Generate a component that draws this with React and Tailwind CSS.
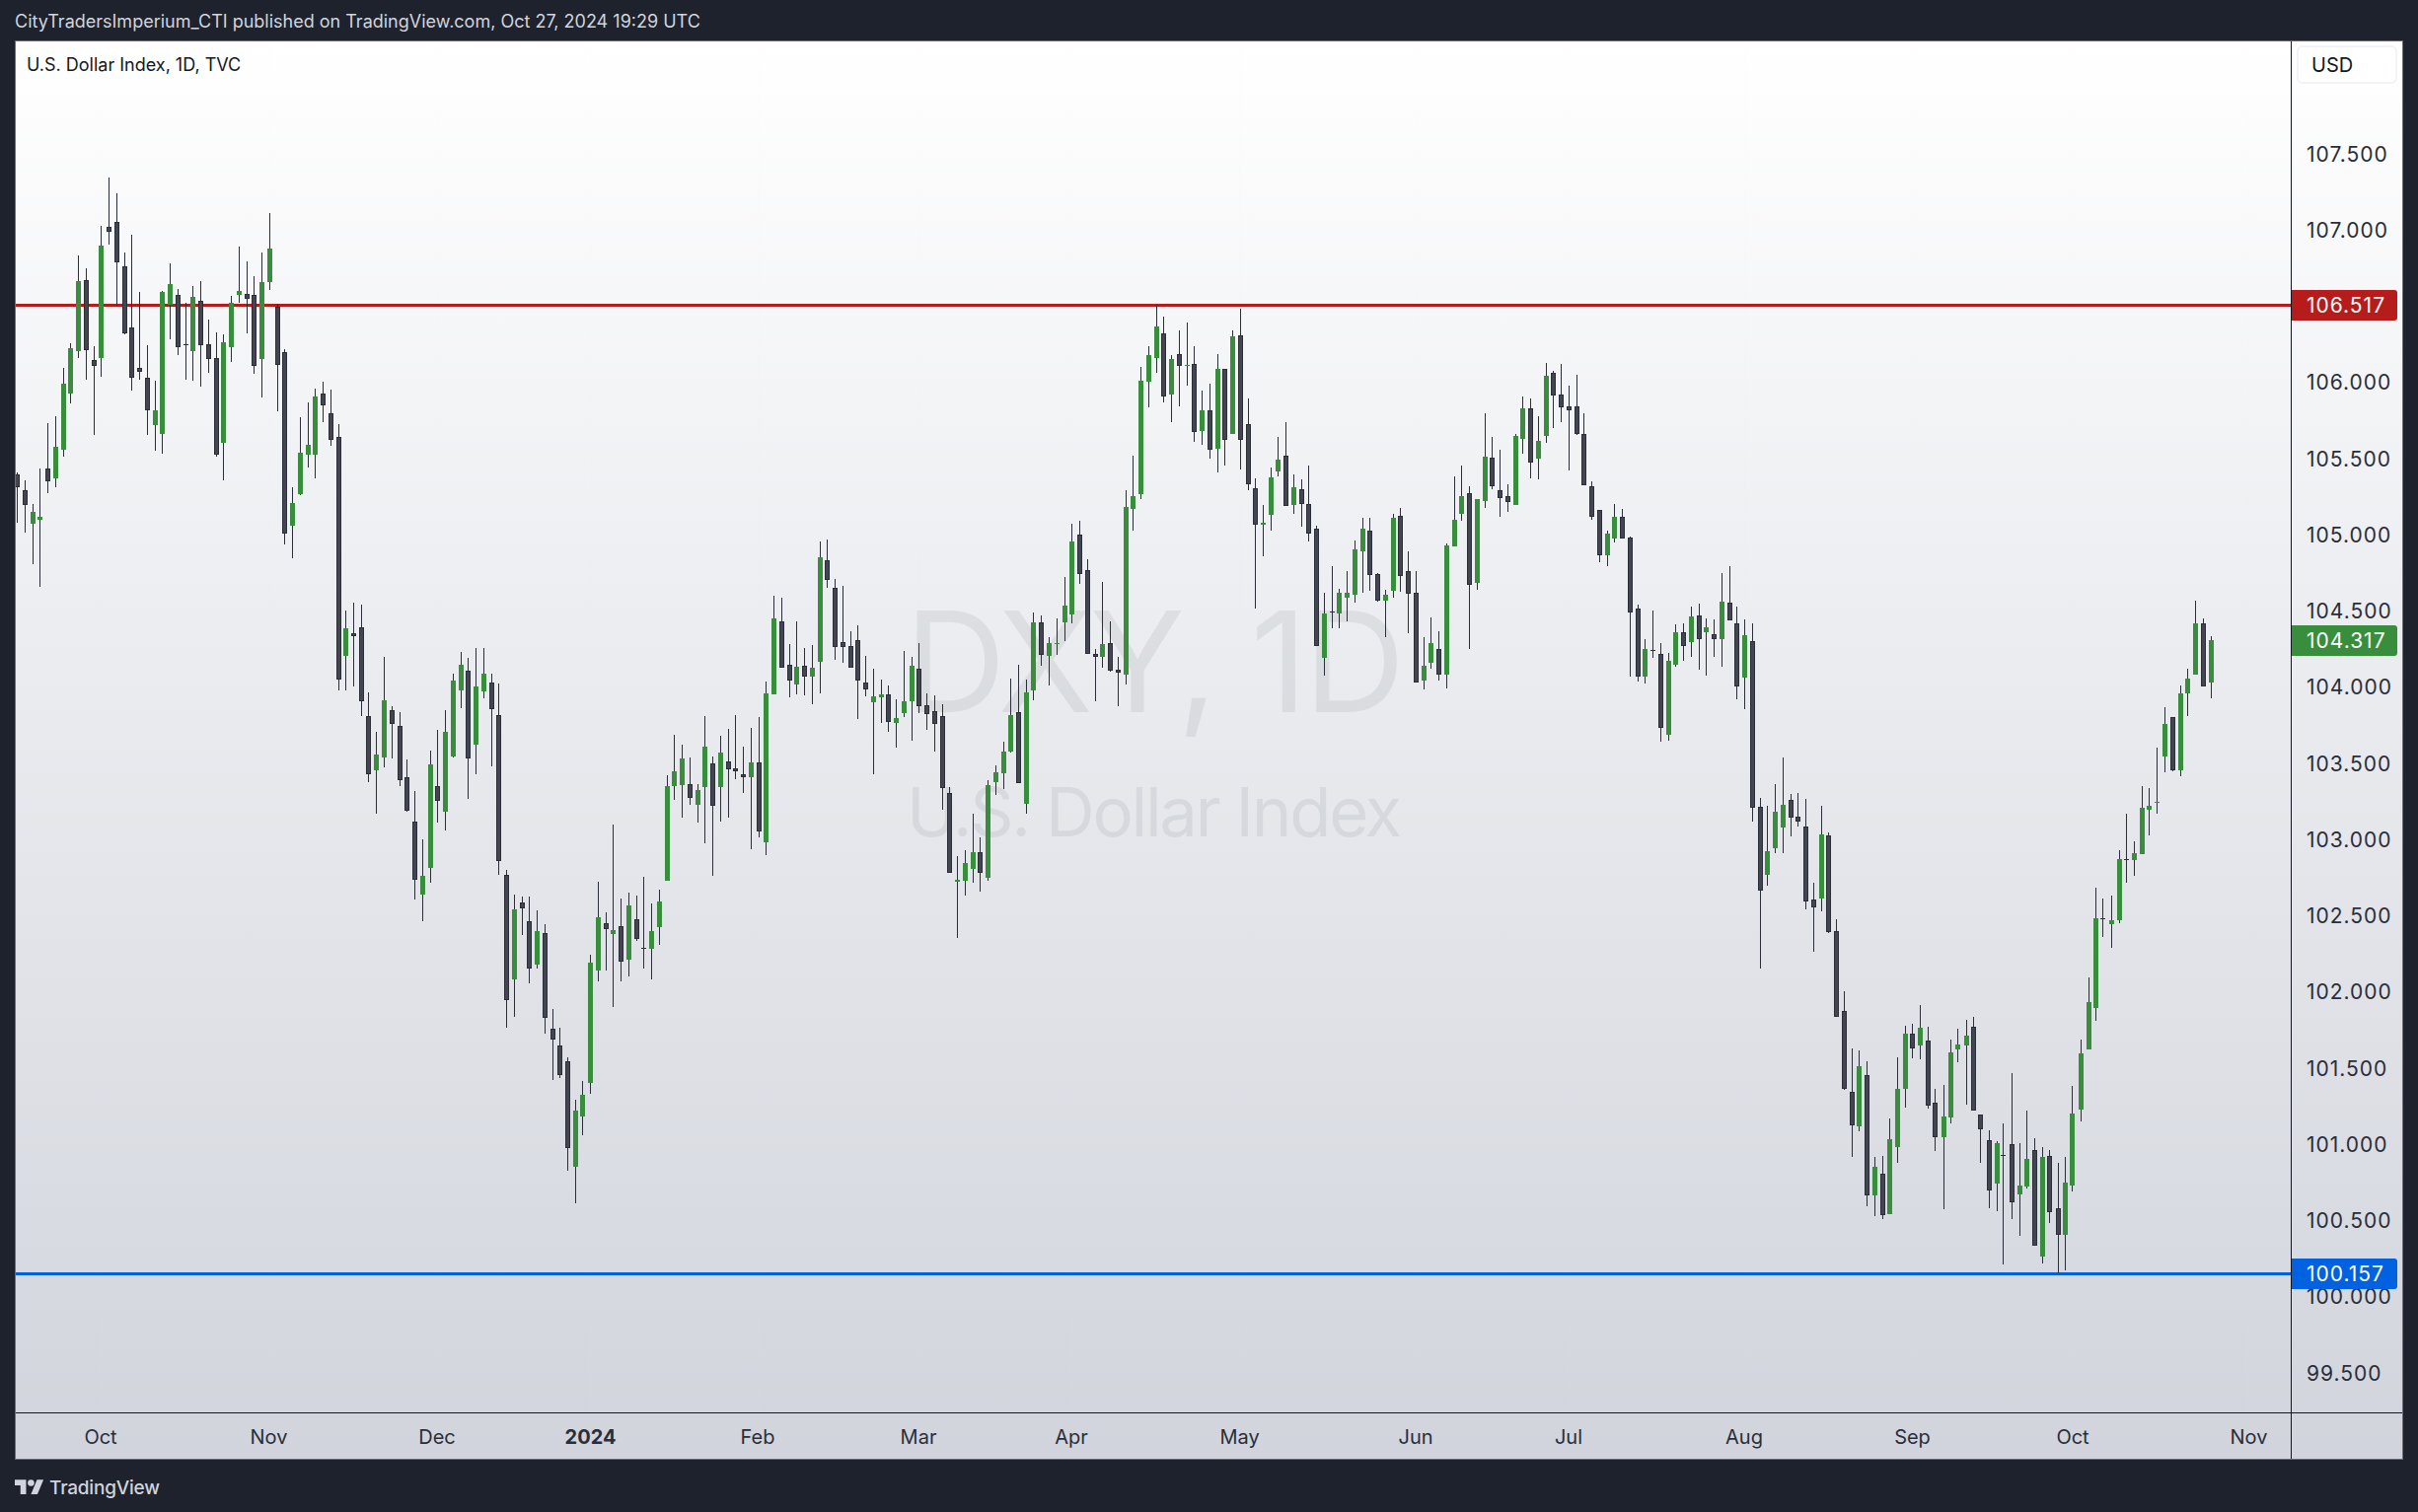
const A = [
[34,479,481,494,530,'d'],[50,487,497,512,540,'d'],[66,511,519,531,572,'g'],[79,475,524,527,595,'g'],[95,429,475,488,500,'d'],[111,422,453,485,494,'g'],[126,373,389,456,463,'g'],[140,348,353,399,409,'g'],[156,259,285,356,363,'g'],[171,272,284,355,385,'d'],[187,351,365,371,441,'d'],[201,229,249,363,382,'g'],[217,180,230,235,248,'d'],[232,196,225,266,310,'d'],[248,256,270,338,339,'d'],[262,238,332,383,396,'d'],[277,296,373,377,385,'d'],[293,350,383,416,441,'d'],[309,386,416,431,457,'g'],[323,295,296,440,460,'g'],[338,267,288,309,344,'g'],[354,293,299,352,360,'d'],[369,307,349,350,385,'d'],[383,290,301,356,386,'g'],[399,285,305,350,392,'d'],[415,324,349,364,378,'d'],[430,337,363,461,463,'d'],[444,339,347,449,487,'g'],[460,300,307,352,367,'g'],[475,250,295,299,307,'g'],[491,265,298,303,338,'d'],[505,280,299,371,379,'d'],[520,256,286,364,403,'g'],[536,216,252,286,294,'g'],[552,308,311,370,417,'d'],[565,354,357,541,552,'d'],[581,494,510,533,566,'g'],[597,423,459,501,502,'g'],[612,408,451,461,474,'g'],[626,394,402,461,485,'g'],[642,387,399,411,428,'d'],[657,395,419,446,452,'d'],[673,430,443,689,700,'d'],
];
const B = [
[687,291,328,387,460,'g'],[703,274,338,345,452,'d'],[718,278,326,483,514,'d'],[733,464,514,638,654,'d'],[748,548,596,629,721,'g'],[763,388,481,602,623,'g'],[779,493,502,531,604,'d'],[795,506,535,650,663,'d'],[808,606,644,715,717,'d'],[824,673,738,861,903,'d'],[840,776,853,893,949,'g'],[856,587,617,836,868,'g'],[869,544,663,694,740,'d'],[885,502,548,717,757,'g'],[901,424,439,600,602,'g'],[916,378,406,460,498,'g'],[930,391,418,604,690,'d'],[946,370,452,575,638,'g'],[961,370,424,462,477,'g'],[977,424,443,500,621,'d'],[991,445,512,822,851,'d'],[1006,840,851,1116,1175,'d'],[1022,893,924,1073,1152,'g'],[1038,897,909,922,978,'d'],[1052,897,949,1050,1081,'d'],[1067,926,970,1042,1050,'g'],[1083,955,974,1154,1187,'d'],[1099,1135,1177,1200,1286,'d'],[1112,1175,1213,1275,1282,'d'],[1128,1238,1246,1430,1478,'d'],[1144,1328,1351,1470,1547,'g'],[1157,1288,1317,1363,1403,'g'],[1173,1020,1037,1292,1315,'g'],[1189,866,941,1054,1077,'g'],[1204,930,953,966,1054,'d'],[1218,744,968,976,1131,'g'],[1234,901,960,1035,1077,'d'],[1249,889,916,1031,1066,'g'],[1265,895,945,987,991,'d'],[1279,855,1006,1008,1050,'d'],[1295,912,970,1008,1073,'g'],[1310,882,907,962,999,'g'],[1326,640,663,863,863,'g'],[1340,555,631,663,694,'g'],[1355,575,604,661,730,'g'],[1371,602,659,688,702,'d'],[1387,659,671,702,740,'g'],[1400,514,579,665,784,'g'],[1416,600,615,705,853,'d'],[1432,556,592,665,738,'g'],[1447,541,610,627,730,'d'],[1461,512,625,631,648,'d'],[1477,579,638,644,677,'d'],[1493,539,613,644,797,'g'],[1508,516,613,759,771,'d'],[1522,441,466,782,809,'g'],[1538,259,307,468,468,'g'],[1553,263,314,412,412,'d'],
];
const C = [
[0,1120,1182,1229,1281,'d'],[15,1050,1188,1242,1272,'g'],[30,1132,1185,1218,1275,'d'],[46,1122,1191,1218,1302,'g'],[62,808,855,1173,1269,'g'],[75,801,864,924,948,'d'],[91,922,948,1128,1167,'d'],[107,942,1113,1128,1176,'d'],[123,1080,1125,1191,1191,'d'],[136,1062,1107,1230,1347,'d'],[152,1155,1236,1257,1278,'d'],[168,1194,1278,1296,1515,'g'],[183,1227,1272,1281,1359,'g'],[197,1245,1272,1356,1386,'d'],[213,1287,1344,1359,1434,'g'],[228,1140,1293,1329,1341,'g'],[244,1158,1185,1293,1413,'g'],[258,1116,1194,1308,1329,'d'],[273,1269,1305,1332,1380,'d'],[289,1275,1323,1362,1446,'d'],[305,1302,1338,1557,1623,'d'],
[486,1023,1053,1260,1290,'g'],[501,1032,1053,1152,1185,'d'],[516,1098,1116,1155,1245,'g'],[532,1041,1116,1119,1152,'g'],[548,915,1002,1053,1110,'g'],[561,753,807,1029,1056,'g'],[577,744,786,906,936,'d'],[593,861,894,1149,1149,'d'],[608,1134,1149,1158,1293,'d'],[622,930,1119,1158,1191,'g'],[638,1050,1116,1200,1203,'d'],[654,1158,1197,1206,1308,'d'],[669,651,702,1212,1242,'g'],[683,546,669,708,774,'g'],[699,276,318,663,678,'g'],[714,213,240,321,399,'g'],[730,87,153,249,294,'g'],[744,123,174,366,384,'d'],[759,240,252,360,444,'g'],[775,165,237,273,396,'d'],[791,141,270,273,333,'g'],[804,213,267,474,504,'d'],[820,348,408,471,513,'g'],[836,327,408,528,555,'d'],[852,237,282,525,597,'g'],[865,282,282,498,576,'d'],[881,165,183,480,480,'g'],[897,99,180,498,588,'d'],[912,372,450,633,651,'d'],[926,615,645,756,1011,'d'],[942,696,750,756,852,'g'],[958,582,612,726,774,'g'],[971,489,558,594,609,'g'],[987,444,546,699,699,'d'],[1003,603,642,696,723,'g'],[1018,618,648,693,762,'d'],[1032,576,693,783,807,'d'],[1048,759,768,1125,1125,'d'],[1063,963,1026,1161,1215,'g'],[1079,882,1020,1023,1071,'d'],[1093,951,963,1026,1071,'g'],[1108,897,963,978,1050,'g'],[1124,804,831,969,993,'g'],[1140,735,768,837,963,'g'],[1153,735,774,909,957,'d'],[1169,903,906,987,990,'d'],[1185,954,969,987,1098,'g'],[1201,723,735,957,978,'g'],[1214,705,729,912,960,'d'],[1230,837,897,966,1086,'d'],[1245,897,963,1236,1236,'d'],[1261,1098,1185,1230,1257,'g'],[1275,1038,1116,1176,1194,'g'],[1291,1080,1134,1212,1230,'d'],[1306,813,819,1212,1254,'g'],[1322,609,741,822,822,'g'],[1336,576,669,723,744,'g'],[1351,639,660,939,1134,'d'],[1367,678,678,933,954,'g'],[1383,417,549,684,705,'g'],[1396,489,552,639,648,'d'],[1412,528,651,675,732,'d'],[1428,633,669,687,717,'d'],[1443,480,486,696,696,'g'],[1457,366,402,495,540,'g'],[1473,372,402,567,615,'d'],[1489,426,501,555,618,'g'],[1504,264,303,486,507,'g'],[1518,288,294,363,462,'d'],[1534,267,360,399,444,'d'],[1549,333,396,408,591,'d'],[1565,300,396,480,483,'d'],
];
const D = [
[487,234,252,495,495,'d'],[511,445,516,522,693,'g'],[535,426,465,519,564,'g'],[559,315,432,483,525,'g'],[580,387,432,495,552,'d'],[604,213,228,510,519,'g'],[628,168,189,219,258,'g'],[652,96,126,192,240,'g'],[673,-96,15,126,129,'g'],[697,-138,6,222,222,'d'],[721,-93,-54,285,315,'g'],
];
const E = [
[10,207,270,426,426,'d'],[25,414,429,522,531,'d'],[40,501,501,639,660,'d'],[54,564,573,639,672,'g'],[67,483,522,588,600,'g'],[82,498,522,588,588,'d'],[96,582,585,813,1008,'d'],[111,789,801,1008,1023,'d'],[124,894,924,1008,1029,'g'],[139,807,927,930,951,'d'],[154,906,939,1164,1206,'d'],[168,936,960,1185,1203,'g'],[182,849,873,972,978,'g'],[196,846,873,915,960,'d'],[211,795,825,903,948,'g'],[226,786,822,894,987,'d'],[239,831,858,873,1005,'g'],[253,834,879,894,948,'d'],[268,693,780,894,978,'g'],[283,672,783,837,837,'d'],[296,795,846,1038,1077,'d'],[310,834,882,1011,1107,'g'],[325,846,900,1407,1449,'d'],
[1096,1101,1152,1251,1299,'g'],[1110,1131,1131,1293,1296,'d'],[1125,1035,1059,1293,1311,'g'],[1138,984,1014,1059,1128,'g'],[1153,777,846,1002,1002,'g'],[1167,831,846,1038,1038,'d'],[1182,885,897,1026,1074,'g'],
];
const F = [
[176,27,54,309,546,'d'],[191,52,189,261,294,'g'],[208,-15,69,180,195,'g'],[224,-96,48,117,195,'g'],[241,15,33,87,144,'d'],[256,12,84,99,114,'d'],[272,30,114,342,366,'d'],[289,285,336,360,495,'d'],[306,51,138,333,372,'g'],[320,132,141,435,438,'d'],[337,396,432,693,693,'d'],[353,615,675,912,915,'d'],[371,789,921,1023,1119,'d'],[385,795,843,1026,1041,'g'],[402,828,870,1236,1269,'d'],[418,1119,1149,1236,1299,'g'],[435,1116,1170,1296,1308,'d'],[450,1002,1065,1293,1293,'g'],[466,816,912,1089,1137,'g'],[483,720,744,912,969,'g'],[499,714,744,789,819,'d'],[514,657,726,780,822,'g'],[531,723,765,963,972,'d'],[547,912,954,1059,1101,'d'],[564,900,996,1059,1278,'g'],[579,762,801,999,1017,'g'],[595,729,777,792,831,'g'],[612,702,750,780,960,'g'],[627,693,723,978,978,'d'],[643,990,990,1035,1137,'d'],[660,1038,1068,1221,1275,'d'],[677,1071,1077,1200,1284,'g'],[691,1017,1113,1115,1446,'d'],[708,864,1080,1257,1308,'d'],[725,1077,1206,1233,1359,'g'],[741,978,1125,1209,1215,'g'],[756,1062,1098,1389,1389,'d'],[773,1089,1119,1422,1443,'g'],[789,1098,1116,1287,1320,'d'],[806,1137,1275,1356,1473,'d'],[821,1119,1197,1356,1464,'g'],[837,903,987,1206,1224,'g'],[854,762,804,975,1011,'g'],[871,573,648,792,792,'g'],[886,300,393,666,705,'g'],[902,333,394,396,450,'d'],[919,324,399,411,483,'g'],[936,186,213,399,408,'g'],[951,75,213,215,285,'d'],[967,159,195,216,264,'g'],[984,-9,57,198,198,'g'],[1000,-3,51,63,141,'g'],[1015,-126,39,39,75,'g'],
];

const seg = (rows, x0, sx, y0, sy) =>
  rows.map(([zx, t, bt, bb, b, c]) => ({
    px: Math.round(x0 + zx / sx - 0.5),
    t: y0 + t / sy,
    bt: y0 + bt / sy,
    bb: y0 + bb / sy,
    b: y0 + b / sy,
    c,
  }));

const candles = [
  ...seg(A, 0, 1.96, 0, 1),
  ...seg(B, 0, 1.96, 480, 2.0907),
  ...seg(C, 800, 1.96, 280, 3),
  ...seg(D, 800, 3, 720, 3),
  ...seg(E, 1600, 1.8425, 350, 3),
  ...seg(F, 1700, 2.088, 800, 3),
];

const WICK = '#2a2e39';
const DARK = '#434651';
const GREEN = '#388e3c';

function Chart() {
  const vLines = [102, 273, 443, 599, 768, 931, 1086, 1256, 1435, 1590, 1768, 1938, 2101, 2279];
  return (
    <svg className="absolute inset-0 h-full w-full" viewBox="16 42 2306 1390" preserveAspectRatio="none">
      {vLines.map((x) => (
        <rect key={x} x={x} y={42} width={1} height={1390} fill="#f0f3fa" opacity={0.05} />
      ))}
      <rect x={16} y={308} width={2306} height={3} fill="#b71c1c" />
      <rect x={16} y={1290} width={2306} height={3} fill="#0062e0" />
      <g shapeRendering="crispEdges">
        {candles.map((k, n) => {
          const top = Math.round(k.bt);
          const h = Math.max(1, Math.round(k.bb) - top);
          return (
            <g key={n}>
              <rect x={k.px} y={Math.round(k.t)} width={1} height={Math.max(1, Math.round(k.b - k.t))} fill={WICK} />
              {k.c === 'g' ? (
                <rect x={k.px - 2} y={top} width={5} height={h} fill={GREEN} />
              ) : (
                <>
                  <rect x={k.px - 2} y={top} width={5} height={h} fill={WICK} />
                  {h > 2 && <rect x={k.px - 1} y={top + 1} width={3} height={h - 2} fill={DARK} />}
                </>
              )}
            </g>
          );
        })}
      </g>
    </svg>
  );
}

const prices = ['107.500','107.000','','106.000','105.500','105.000','104.500','104.000','103.500','103.000','102.500','102.000','101.500','101.000','100.500','100.000','99.500'];

const months = [
  { t: 'Oct', gap: 'ml-[86px]' },
  { t: 'Nov', gap: 'ml-[170.5px]' },
  { t: 'Dec', gap: 'ml-[170.5px]' },
  { t: '2024', gap: 'ml-[155.5px]', bold: true },
  { t: 'Feb', gap: 'ml-[169.5px]' },
  { t: 'Mar', gap: 'ml-[163px]' },
  { t: 'Apr', gap: 'ml-[155px]' },
  { t: 'May', gap: 'ml-[170.5px]' },
  { t: 'Jun', gap: 'ml-[178.5px]' },
  { t: 'Jul', gap: 'ml-[155px]' },
  { t: 'Aug', gap: 'ml-[178px]' },
  { t: 'Sep', gap: 'ml-[170.5px]' },
  { t: 'Oct', gap: 'ml-[162.5px]' },
  { t: 'Nov', gap: 'ml-[178.5px]' },
];

function Badge({ value, cls }) {
  return (
    <div className={`absolute left-0 flex h-[31px] w-[107px] items-center rounded-r-[3px] pl-[15px] text-[21px] leading-none tracking-[1px] text-white ${cls}`}>
      {value}
    </div>
  );
}

export default function App() {
  return (
    <div className="flex h-[1533px] w-[2451px] flex-col overflow-hidden bg-[#1e222d] font-['Inter',sans-serif]">
      <header className="flex h-[41px] shrink-0 items-center pl-[15px] pt-[2px] text-[18px] leading-none text-[#d1d4dc]">
        CityTradersImperium_CTI published on TradingView.com, Oct 27, 2024 19:29 UTC
      </header>

      <main className="ml-[15px] flex h-[1439px] w-[2421px] shrink-0 flex-col border border-[#6a6d78] bg-gradient-to-b from-white to-[#d1d4dc]">
        <div className="flex h-[1390px] shrink-0">
          <div className="relative h-full w-[2306px] shrink-0 overflow-hidden">
            <div className="absolute inset-x-0 top-[543px] flex flex-col items-center text-[#131722]/[.07]">
              <div className="text-[142px] leading-[170px] tracking-[-3.3px]">DXY, 1D</div>
              <div className="mt-[26px] text-[69px] leading-[84px] tracking-[-2.3px]">U.S. Dollar Index</div>
            </div>
            <div className="absolute left-[11px] top-[13.5px] text-[18px] leading-[20px] text-[#131722]">
              U.S. Dollar Index, 1D, TVC
            </div>
            <Chart />
          </div>

          <div className="relative flex-1 border-l border-[#131722]">
            <div className="mx-[5px] mt-[4px] flex h-[39px] w-[102px] items-center rounded-[6px] border-2 border-[#f0f3fa] bg-white pl-[13px] text-[20px] text-[#131722]">
              USD
            </div>
            <div className="mt-[32.5px] flex flex-col pl-[15px] text-[21px] leading-none tracking-[1px] text-[#2a2e39]">
              {prices.map((p, i) => (
                <div key={i} className="flex h-[77.25px] items-center">
                  {p}
                </div>
              ))}
            </div>
            <Badge value="106.517" cls="top-[252px] bg-[#b71c1c]" />
            <Badge value="104.317" cls="top-[592px] bg-[#388e3c]" />
            <Badge value="100.157" cls="top-[1234px] bg-[#0062e0]" />
          </div>
        </div>

        <div className="flex flex-1 border-t border-[#131722]">
          <div className="flex h-full w-[2306px] shrink-0 items-center pt-[2px] text-[20px] text-[#2a2e39]">
            {months.map((m, i) => (
              <div key={i} className={`flex w-0 justify-center whitespace-nowrap ${m.gap} ${m.bold ? 'font-bold' : ''}`}>
                {m.t}
              </div>
            ))}
          </div>
          <div className="flex-1 border-l border-[#131722]" />
        </div>
      </main>

      <footer className="flex flex-1 items-center pl-[15px] pt-[3px]">
        <svg width="29.5" height="23" viewBox="0 0 36 28" fill="#d1d4dc">
          <path d="M14 22H7V11H0V4h14v18ZM28 22h-8l7.5-18h8L28 22Z" />
          <circle cx="20" cy="8" r="4" />
        </svg>
        <span className="ml-[5.5px] text-[19px] font-medium leading-none tracking-[-0.2px] text-[#d1d4dc]">TradingView</span>
      </footer>
    </div>
  );
}
